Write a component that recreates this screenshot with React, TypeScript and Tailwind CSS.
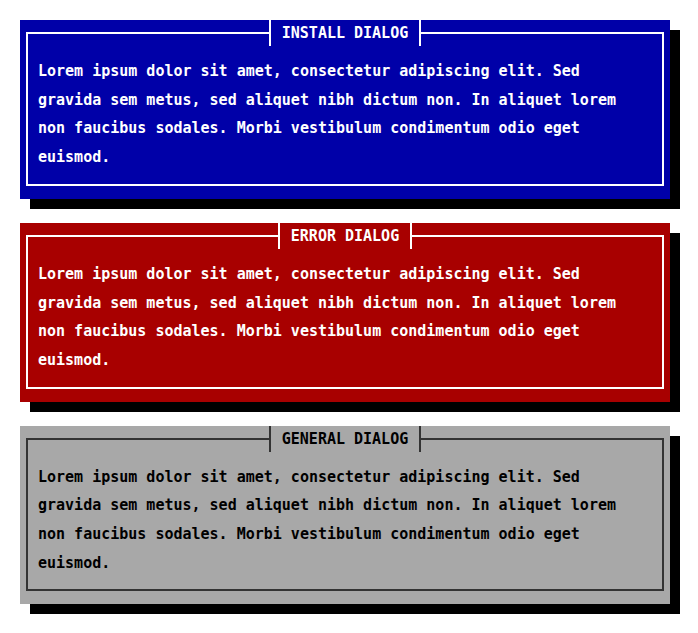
import React from 'react';

type Dialog = {
  title: string;
  bg: string;
  fg: string;
  line: string;
};

const DIALOGS: Dialog[] = [
  { title: 'INSTALL DIALOG', bg: 'bg-[#0000a8]', fg: 'text-white', line: 'border-white' },
  { title: 'ERROR DIALOG', bg: 'bg-[#a80000]', fg: 'text-white', line: 'border-white' },
  { title: 'GENERAL DIALOG', bg: 'bg-[#a8a8a8]', fg: 'text-black', line: 'border-[#333333]' },
];

const BODY =
  'Lorem ipsum dolor sit amet, consectetur adipiscing elit. Sed gravida sem metus, sed aliquet nibh dictum non. In aliquet lorem non faucibus sodales. Morbi vestibulum condimentum odio eget euismod.';

const App: React.FC = () => {
  return (
    <div className="min-h-screen bg-white pt-[20px] pl-[20px] font-['DejaVu_Sans_Mono',monospace]">
      <div className="flex w-[650px] flex-col gap-[24px]">
        {DIALOGS.map(d => (
          <div
            key={d.title}
            className={`${d.bg} ${d.fg} px-[6px] pb-[13px] shadow-[10px_10px_0_0_#000]`}
          >
            <fieldset className={`m-0 border-2 ${d.line} px-[10px] pt-[11px] pb-[12px]`}>
              <legend
                className={`mx-auto border-x-2 ${d.line} px-[11px] text-[15px] leading-[26px] font-bold`}
              >
                {d.title}
              </legend>
              <p className="text-[15px] leading-[28.7px] font-bold">{BODY}</p>
            </fieldset>
          </div>
        ))}
      </div>
    </div>
  );
};

export default App;
